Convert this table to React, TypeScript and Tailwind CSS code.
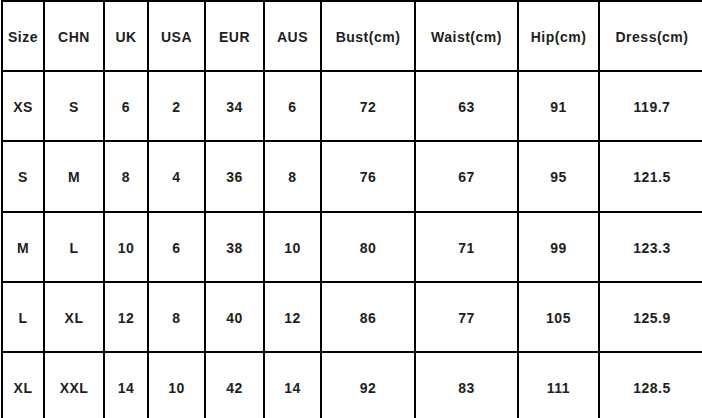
import React from "react";

const header = ["Size", "CHN", "UK", "USA", "EUR", "AUS", "Bust(cm)", "Waist(cm)", "Hip(cm)", "Dress(cm)"];
const rows = [
  ["XS", "S", "6", "2", "34", "6", "72", "63", "91", "119.7"],
  ["S", "M", "8", "4", "36", "8", "76", "67", "95", "121.5"],
  ["M", "L", "10", "6", "38", "10", "80", "71", "99", "123.3"],
  ["L", "XL", "12", "8", "40", "12", "86", "77", "105", "125.9"],
  ["XL", "XXL", "14", "10", "42", "14", "92", "83", "111", "128.5"],
];

export default function App() {
  const all = [header, ...rows];
  return (
    <div className="w-[702px] h-[418px] overflow-hidden bg-white" style={{ fontFamily: '"Liberation Sans", Arial, sans-serif' }}>
      <div className="ml-[1px] w-[705px] grid grid-cols-[40px_58px_42px_55px_57px_55px_92px_101px_79px_104px] grid-rows-[68px_68px_69px_68px_68px_68px] gap-[2px] p-[2px] bg-black">
        {all.flatMap((r, i) =>
          r.map((c, j) => (
            <div key={`${i}-${j}`} className="bg-white flex items-center justify-center pt-[2px] text-[14px] tracking-[0.5px] font-bold text-[#1e1e1e]">
              {c}
            </div>
          ))
        )}
      </div>
    </div>
  );
}
